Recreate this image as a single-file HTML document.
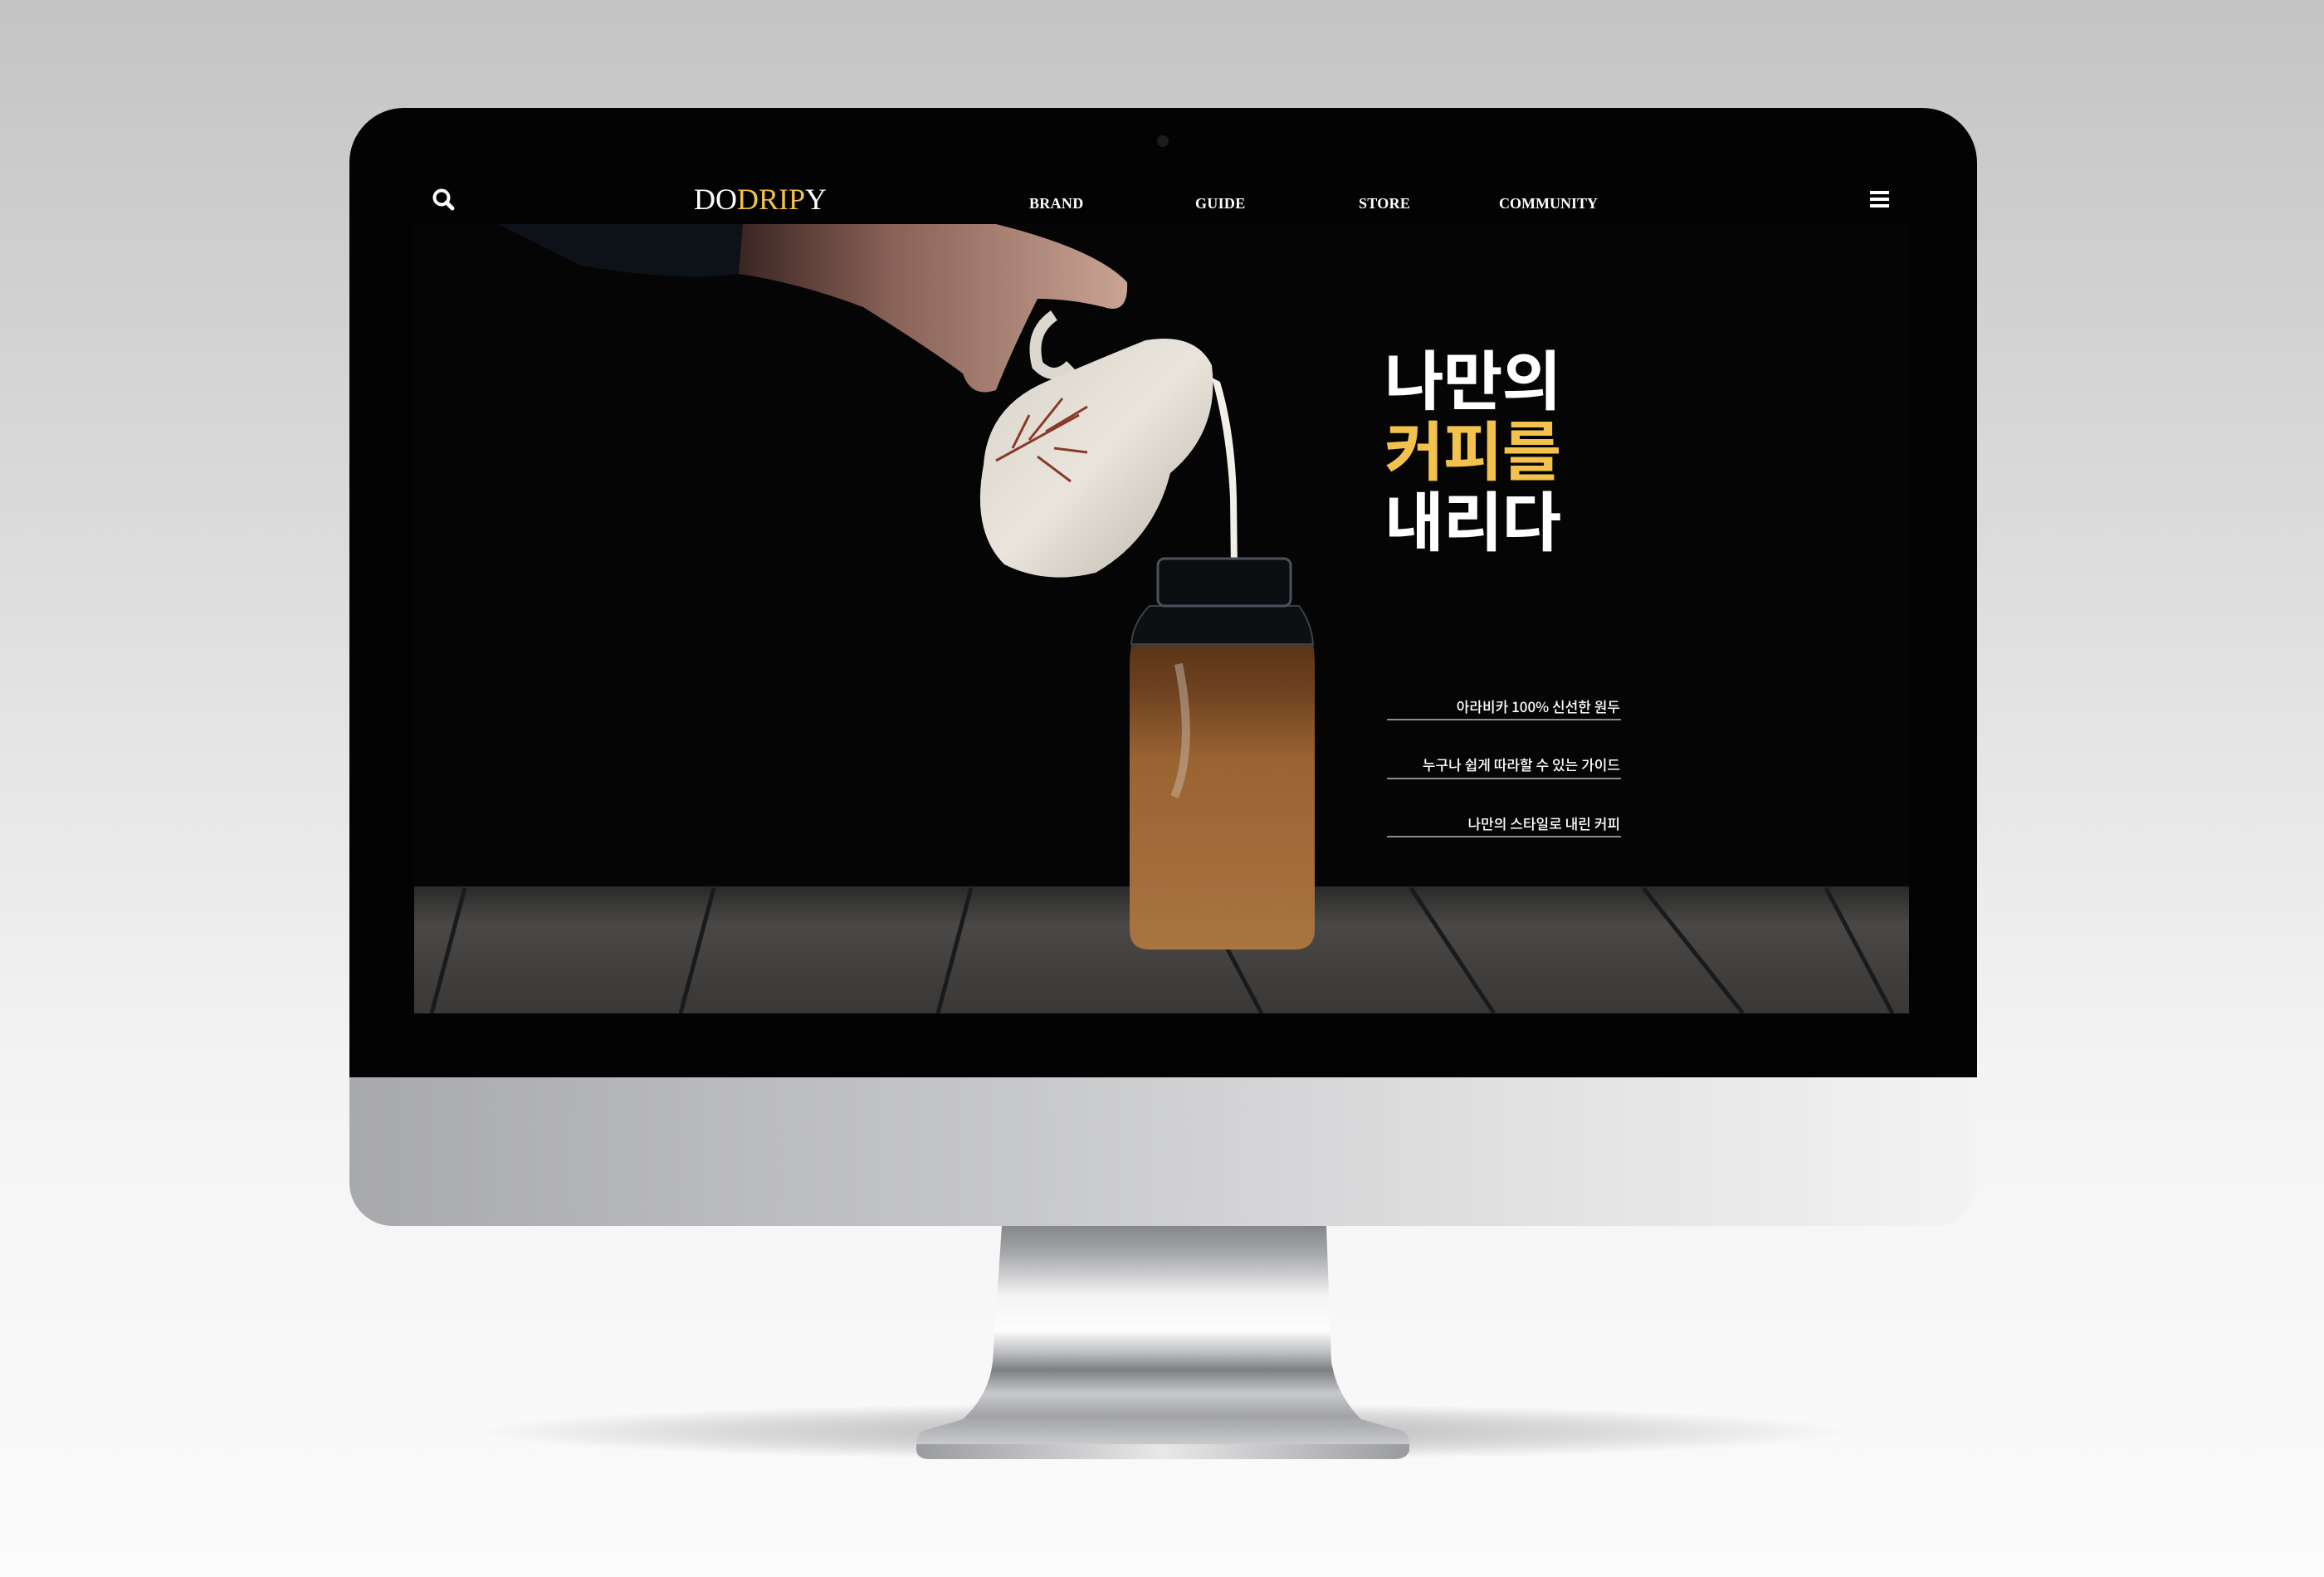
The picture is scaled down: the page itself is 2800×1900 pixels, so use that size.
<!DOCTYPE html>
<html><head><meta charset="utf-8">
<style>
*{margin:0;padding:0;box-sizing:border-box}
html,body{width:2800px;height:1900px;overflow:hidden}
body{position:relative;background:linear-gradient(180deg,#c4c4c4 0px,#dadada 600px,#f4f4f4 1300px,#fbfbfb 1900px);font-family:"Liberation Sans","Noto Sans CJK KR",sans-serif}
.abs{position:absolute}
#mon{left:421px;top:130px;width:1961px;height:1347px;border-radius:66px 66px 52px 52px;overflow:hidden;background:linear-gradient(90deg,#a8a9ad 0%,#c6c7ca 40%,#e0e0e1 70%,#f3f3f3 100%)}
#bez{left:0;top:0;width:1961px;height:1168px;background:#030303}
.nav{color:#fff;font-family:"Liberation Serif",serif;font-weight:bold;font-size:18px;top:235px;letter-spacing:0.3px}
.hl{font-family:"Noto Sans CJK KR",sans-serif;font-weight:700;font-size:78px;line-height:85px;color:#fff;left:1668px;top:412px;letter-spacing:-1px}
.sub{font-family:"Noto Sans CJK KR",sans-serif;font-weight:500;font-size:17px;color:#fff;right:848px;text-align:right}
.ln{left:1671px;width:282px;height:2px;background:#8a8a8a}
</style></head><body>
<div class="abs" style="left:560px;top:1690px;width:1680px;height:70px;border-radius:50%;background:radial-gradient(ellipse at center,rgba(0,0,0,.28) 0%,rgba(0,0,0,.12) 45%,rgba(0,0,0,0) 70%)"></div>
<svg class="abs" style="left:0;top:0" width="2800" height="1900">
<defs>
<linearGradient id="neck" x1="0" y1="0" x2="0" y2="1">
<stop offset="0" stop-color="#86878b"/><stop offset=".12" stop-color="#a7a8ac"/><stop offset=".3" stop-color="#f4f4f4"/><stop offset=".45" stop-color="#fdfdfd"/><stop offset=".55" stop-color="#b9babd"/><stop offset=".62" stop-color="#7d7e82"/><stop offset=".72" stop-color="#c8c9cc"/><stop offset=".82" stop-color="#a2a3a7"/><stop offset="1" stop-color="#dcdde0"/>
</linearGradient>
<linearGradient id="base" x1="0" y1="0" x2="1" y2="0"><stop offset="0" stop-color="#9a9b9f"/><stop offset=".5" stop-color="#e8e8e8"/><stop offset="1" stop-color="#9a9b9f"/></linearGradient>
</defs>
<path d="M1207 1477 L1598 1477 L1604 1640 Q1610 1680 1640 1710 L1690 1724 Q1698 1728 1698 1740 L1698 1745 Q1696 1757 1680 1757 L1120 1757 Q1104 1757 1104 1745 L1104 1740 Q1104 1728 1112 1724 L1160 1710 Q1192 1680 1196 1640 Z" fill="url(#neck)"/>
<path d="M1104 1740 L1698 1740 L1698 1748 Q1694 1758 1680 1758 L1120 1758 Q1106 1758 1104 1748 Z" fill="url(#base)"/>
</svg>
<div id="mon" class="abs"><div id="bez" class="abs"></div></div>
<div class="abs" style="left:1394px;top:163px;width:14px;height:14px;border-radius:50%;background:#1c1c1e"></div>
<svg class="abs" style="left:499px;top:270px" width="1801" height="951" viewBox="499 270 1801 951">
<defs>
<linearGradient id="wood" x1="0" y1="0" x2="0" y2="1"><stop offset="0" stop-color="#2a2a2a"/><stop offset=".3" stop-color="#4a4846"/><stop offset="1" stop-color="#3a3837"/></linearGradient>
<linearGradient id="cof" x1="0" y1="0" x2="0" y2="1"><stop offset="0" stop-color="#4a2a12"/><stop offset=".25" stop-color="#6e4220"/><stop offset=".45" stop-color="#9a6432"/><stop offset="1" stop-color="#a87440"/></linearGradient>
<linearGradient id="pit" x1="0" y1="0" x2="1" y2="1"><stop offset="0" stop-color="#d8d2c8"/><stop offset=".5" stop-color="#eae5dc"/><stop offset="1" stop-color="#b8b2a8"/></linearGradient>
<linearGradient id="skin" x1="0" y1="0" x2="1" y2="0"><stop offset="0" stop-color="#3a2522"/><stop offset=".4" stop-color="#8a6258"/><stop offset="1" stop-color="#c9a394"/></linearGradient>
</defs>
<rect x="499" y="270" width="1801" height="951" fill="#050505"/>
<rect x="499" y="1068" width="1801" height="153" fill="url(#wood)"/>
<g stroke="#1a1a1a" stroke-width="5">
<line x1="560" y1="1070" x2="520" y2="1221"/><line x1="860" y1="1070" x2="820" y2="1221"/><line x1="1170" y1="1070" x2="1130" y2="1221"/><line x1="1440" y1="1070" x2="1520" y2="1221"/><line x1="1700" y1="1070" x2="1800" y2="1221"/><line x1="1980" y1="1070" x2="2100" y2="1221"/><line x1="2200" y1="1070" x2="2280" y2="1221"/>
</g>
<path d="M600 270 L895 270 L890 330 Q820 340 700 320 Z" fill="#0d1218"/>
<path d="M895 270 L1200 270 Q1320 300 1358 340 Q1360 380 1330 370 Q1290 360 1250 360 Q1220 420 1200 470 Q1170 480 1160 450 Q1120 420 1040 370 Q960 340 890 330 Z" fill="url(#skin)"/>
<path d="M1270 380 Q1240 400 1250 440 Q1270 460 1290 440" stroke="#ddd8cf" stroke-width="14" fill="none"/>
<path d="M1185 560 Q1190 490 1260 460 Q1330 430 1380 410 Q1440 400 1460 440 Q1470 520 1410 570 Q1390 650 1320 690 Q1260 705 1210 680 Q1170 640 1185 560 Z" fill="url(#pit)"/>
<g stroke="#8a3a2a" stroke-width="3" fill="none"><path d="M1200 555 L1300 500"/><path d="M1220 540 L1240 500"/><path d="M1240 530 L1280 480"/><path d="M1260 520 L1310 490"/><path d="M1270 540 L1310 545"/><path d="M1250 550 L1290 580"/></g>
<path d="M1460 455 Q1478 520 1482 600 L1484 776 L1492 776 L1490 600 Q1488 520 1470 460 Z" fill="#f2efe8"/>
<path d="M1385 730 L1565 730 Q1584 760 1584 800 L1584 1120 Q1584 1144 1560 1144 L1385 1144 Q1361 1144 1361 1120 L1361 800 Q1361 760 1385 730 Z" fill="url(#cof)"/>
<path d="M1385 730 L1565 730 Q1580 750 1582 776 L1363 776 Q1365 750 1385 730 Z" fill="#0d0f11" stroke="#3a4048" stroke-width="2"/>
<rect x="1395" y="673" width="160" height="57" rx="8" fill="#0b0d10" stroke="#4a525c" stroke-width="3"/>
<path d="M1420 800 Q1440 900 1415 960" stroke="#c9b8a8" stroke-width="10" fill="none" opacity=".5"/>
</svg>
<svg class="abs" style="left:520px;top:226px" width="30" height="30" viewBox="0 0 30 30"><circle cx="12" cy="12" r="8.5" stroke="#fff" stroke-width="4" fill="none"/><line x1="18" y1="18" x2="25" y2="25" stroke="#fff" stroke-width="5" stroke-linecap="round"/></svg>
<div class="abs" style="left:836px;top:219px;font-family:'Liberation Serif',serif;font-size:36px;color:#fff;letter-spacing:0px">DO<span style="color:#f2c14e">DRIP</span>Y</div>
<div class="abs nav" style="left:1240px">BRAND</div>
<div class="abs nav" style="left:1440px">GUIDE</div>
<div class="abs nav" style="left:1637px">STORE</div>
<div class="abs nav" style="left:1806px;letter-spacing:0">COMMUNITY</div>
<div class="abs" style="left:2253px;top:230px;width:23px;height:4px;background:#fff"></div>
<div class="abs" style="left:2253px;top:238px;width:23px;height:4px;background:#fff"></div>
<div class="abs" style="left:2253px;top:246px;width:23px;height:4px;background:#fff"></div>
<div class="abs hl">나만의<br><span style="color:#f2c14e">커피를</span><br>내리다</div>
<div class="abs sub" style="top:838px">아라비카 100% 신선한 원두</div>
<div class="abs ln" style="top:866px"></div>
<div class="abs sub" style="top:908px">누구나 쉽게 따라할 수 있는 가이드</div>
<div class="abs ln" style="top:937px"></div>
<div class="abs sub" style="top:979px">나만의 스타일로 내린 커피</div>
<div class="abs ln" style="top:1007px"></div>
</body></html>
